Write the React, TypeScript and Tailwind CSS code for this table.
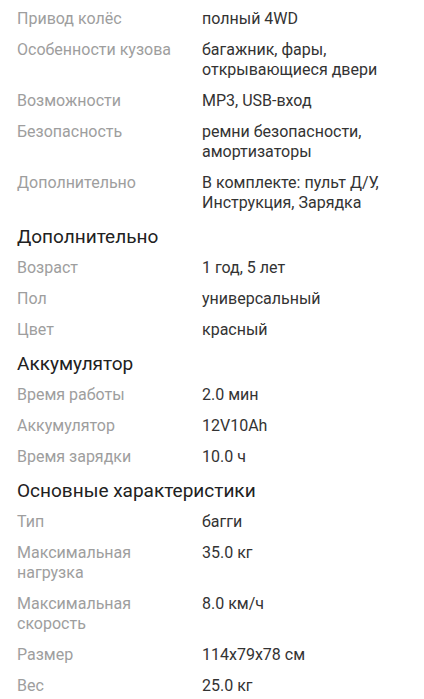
import React from 'react';

type Row = [string, string];

interface Section {
  title?: string;
  rows: Row[];
}

const sections: Section[] = [
  {
    rows: [
      ['Привод колёс', 'полный 4WD'],
      ['Особенности кузова', 'багажник, фары, открывающиеся двери'],
      ['Возможности', 'MP3, USB-вход'],
      ['Безопасность', 'ремни безопасности, амортизаторы'],
      ['Дополнительно', 'В комплекте: пульт Д/У, Инструкция, Зарядка'],
    ],
  },
  {
    title: 'Дополнительно',
    rows: [
      ['Возраст', '1 год, 5 лет'],
      ['Пол', 'универсальный'],
      ['Цвет', 'красный'],
    ],
  },
  {
    title: 'Аккумулятор',
    rows: [
      ['Время работы', '2.0 мин'],
      ['Аккумулятор', '12V10Ah'],
      ['Время зарядки', '10.0 ч'],
    ],
  },
  {
    title: 'Основные характеристики',
    rows: [
      ['Тип', 'багги'],
      ['Максимальная нагрузка', '35.0 кг'],
      ['Максимальная скорость', '8.0 км/ч'],
      ['Размер', '114x79x78 см'],
      ['Вес', '25.0 кг'],
    ],
  },
];

function SpecRow({ label, value }: { label: string; value: string }) {
  return (
    <div className="grid grid-cols-[185px_1fr] pt-[6px] pb-[5px] text-[16px] leading-[20px]">
      <div className="pr-[12px] text-[#9e9e9e]">{label}</div>
      <div className="text-[#333333]">{value}</div>
    </div>
  );
}

export default function App() {
  return (
    <div
      className="min-h-[699px] w-[424px] bg-white pl-[17px] pr-[17px] pt-[3px]"
      style={{ fontFamily: 'Roboto, "Noto Sans", sans-serif' }}
    >
      {sections.map((section, i) => (
        <div key={i}>
          {section.title && (
            <h2 className="pt-[6px] pb-[2px] text-[19px] leading-[26px] text-[#212121]">
              {section.title}
            </h2>
          )}
          {section.rows.map(([label, value]) => (
            <SpecRow key={label} label={label} value={value} />
          ))}
        </div>
      ))}
    </div>
  );
}
